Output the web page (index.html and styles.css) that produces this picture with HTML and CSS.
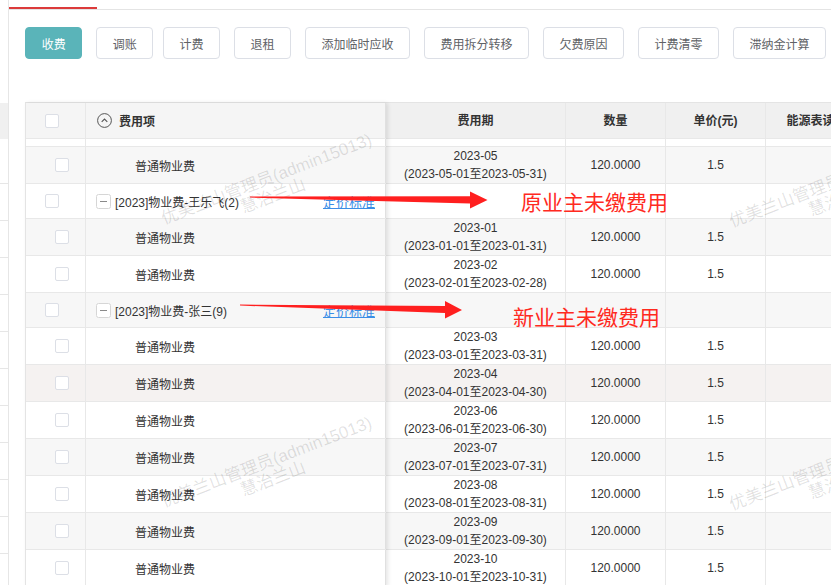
FILE: index.html
```html
<!doctype html>
<html lang="zh-CN">
  <head>
    <meta charset="UTF-8" />
    <meta name="viewport" content="width=device-width, initial-scale=1.0" />
    <title>费用明细</title>
    <link rel="stylesheet" href="styles.css">
  </head>
  <body>
    <div class="page">
      <div class="side"></div>

      <main class="main">
        <div class="tabs"><span class="tab-active"></span></div>

        <div class="toolbar">
          <button class="btn btn-primary">收费</button>
          <button class="btn">调账</button>
          <button class="btn btn-tight">计费</button>
          <button class="btn">退租</button>
          <button class="btn">添加临时应收</button>
          <button class="btn">费用拆分转移</button>
          <button class="btn">欠费原因</button>
          <button class="btn">计费清零</button>
          <button class="btn">滞纳金计算</button>
        </div>

        <div class="fee-table">
          <!-- fixed left columns -->
          <div class="fixed-cols">
            <div class="row head">
              <div class="cell col-check"><span class="checkbox"></span></div>
              <div class="cell col-item">
                <svg class="icon-fold" width="15" height="15" viewBox="0 0 15 15">
                  <circle cx="7.5" cy="7.5" r="6.9" fill="none" stroke="#555" stroke-width="1" />
                  <path d="M4.7 8.9 L7.5 6.1 L10.3 8.9" fill="none" stroke="#555" stroke-width="1.1" />
                </svg>
                费用项
              </div>
            </div>
            <div class="row stub">
              <div class="cell col-check"></div>
              <div class="cell col-item"></div>
            </div>
            <div class="row stripe">
              <div class="cell col-check child"><span class="checkbox"></span></div>
              <div class="cell col-item child">普通物业费</div>
            </div>
            <div class="row group">
              <div class="cell col-check"><span class="checkbox"></span></div>
              <div class="cell col-item">
                <svg class="icon-minus" width="15" height="15" viewBox="0 0 15 15">
                  <rect x="0.5" y="0.5" width="14" height="14" rx="2" fill="#fff" stroke="#d6d6d6" />
                  <path d="M4 7.5 H11" stroke="#8a8a8a" stroke-width="1" />
                </svg>
                [2023]物业费-王乐飞(2)
                <a class="price-link" href="#">定价标准</a>
              </div>
            </div>
            <div class="row stripe">
              <div class="cell col-check child"><span class="checkbox"></span></div>
              <div class="cell col-item child">普通物业费</div>
            </div>
            <div class="row">
              <div class="cell col-check child"><span class="checkbox"></span></div>
              <div class="cell col-item child">普通物业费</div>
            </div>
            <div class="row group stripe">
              <div class="cell col-check"><span class="checkbox"></span></div>
              <div class="cell col-item">
                <svg class="icon-minus" width="15" height="15" viewBox="0 0 15 15">
                  <rect x="0.5" y="0.5" width="14" height="14" rx="2" fill="#fff" stroke="#d6d6d6" />
                  <path d="M4 7.5 H11" stroke="#8a8a8a" stroke-width="1" />
                </svg>
                [2023]物业费-张三(9)
                <a class="price-link" href="#">定价标准</a>
              </div>
            </div>
            <div class="row">
              <div class="cell col-check child"><span class="checkbox"></span></div>
              <div class="cell col-item child">普通物业费</div>
            </div>
            <div class="row hover">
              <div class="cell col-check child"><span class="checkbox"></span></div>
              <div class="cell col-item child">普通物业费</div>
            </div>
            <div class="row">
              <div class="cell col-check child"><span class="checkbox"></span></div>
              <div class="cell col-item child">普通物业费</div>
            </div>
            <div class="row stripe">
              <div class="cell col-check child"><span class="checkbox"></span></div>
              <div class="cell col-item child">普通物业费</div>
            </div>
            <div class="row">
              <div class="cell col-check child"><span class="checkbox"></span></div>
              <div class="cell col-item child">普通物业费</div>
            </div>
            <div class="row stripe">
              <div class="cell col-check child"><span class="checkbox"></span></div>
              <div class="cell col-item child">普通物业费</div>
            </div>
            <div class="row">
              <div class="cell col-check child"><span class="checkbox"></span></div>
              <div class="cell col-item child">普通物业费</div>
            </div>
          </div>

          <!-- scrolling columns -->
          <div class="scroll-cols">
            <div class="row head">
              <div class="cell col-period">费用期</div>
              <div class="cell col-qty">数量</div>
              <div class="cell col-price">单价(元)</div>
              <div class="cell col-meter">能源表读</div>
            </div>
            <div class="row stub">
              <div class="cell col-period"></div>
              <div class="cell col-qty"></div>
              <div class="cell col-price"></div>
              <div class="cell col-meter"></div>
            </div>
            <div class="row stripe">
              <div class="cell col-period">2023-05<br>(2023-05-01至2023-05-31)</div>
              <div class="cell col-qty">120.0000</div>
              <div class="cell col-price">1.5</div>
              <div class="cell col-meter"></div>
            </div>
            <div class="row group">
              <div class="cell col-period"></div>
              <div class="cell col-qty"></div>
              <div class="cell col-price"></div>
              <div class="cell col-meter"></div>
            </div>
            <div class="row stripe">
              <div class="cell col-period">2023-01<br>(2023-01-01至2023-01-31)</div>
              <div class="cell col-qty">120.0000</div>
              <div class="cell col-price">1.5</div>
              <div class="cell col-meter"></div>
            </div>
            <div class="row">
              <div class="cell col-period">2023-02<br>(2023-02-01至2023-02-28)</div>
              <div class="cell col-qty">120.0000</div>
              <div class="cell col-price">1.5</div>
              <div class="cell col-meter"></div>
            </div>
            <div class="row group stripe">
              <div class="cell col-period"></div>
              <div class="cell col-qty"></div>
              <div class="cell col-price"></div>
              <div class="cell col-meter"></div>
            </div>
            <div class="row">
              <div class="cell col-period">2023-03<br>(2023-03-01至2023-03-31)</div>
              <div class="cell col-qty">120.0000</div>
              <div class="cell col-price">1.5</div>
              <div class="cell col-meter"></div>
            </div>
            <div class="row hover">
              <div class="cell col-period">2023-04<br>(2023-04-01至2023-04-30)</div>
              <div class="cell col-qty">120.0000</div>
              <div class="cell col-price">1.5</div>
              <div class="cell col-meter"></div>
            </div>
            <div class="row">
              <div class="cell col-period">2023-06<br>(2023-06-01至2023-06-30)</div>
              <div class="cell col-qty">120.0000</div>
              <div class="cell col-price">1.5</div>
              <div class="cell col-meter"></div>
            </div>
            <div class="row stripe">
              <div class="cell col-period">2023-07<br>(2023-07-01至2023-07-31)</div>
              <div class="cell col-qty">120.0000</div>
              <div class="cell col-price">1.5</div>
              <div class="cell col-meter"></div>
            </div>
            <div class="row">
              <div class="cell col-period">2023-08<br>(2023-08-01至2023-08-31)</div>
              <div class="cell col-qty">120.0000</div>
              <div class="cell col-price">1.5</div>
              <div class="cell col-meter"></div>
            </div>
            <div class="row stripe">
              <div class="cell col-period">2023-09<br>(2023-09-01至2023-09-30)</div>
              <div class="cell col-qty">120.0000</div>
              <div class="cell col-price">1.5</div>
              <div class="cell col-meter"></div>
            </div>
            <div class="row">
              <div class="cell col-period">2023-10<br>(2023-10-01至2023-10-31)</div>
              <div class="cell col-qty">120.0000</div>
              <div class="cell col-price">1.5</div>
              <div class="cell col-meter"></div>
            </div>
          </div>
        </div>
      </main>

      <!-- watermark overlay -->
      <div class="watermark wm-1">优美兰山管理员(admin15013)<br>慧治兰山</div>
      <div class="watermark wm-2">优美兰山管理员(admin15013)<br>慧治兰山</div>
      <div class="watermark wm-3">优美兰山管理员(admin15013)<br>慧治兰山</div>
      <div class="watermark wm-4">优美兰山管理员(admin15013)<br>慧治兰山</div>

      <!-- annotation arrows -->
      <svg class="arrows" width="831" height="585" viewBox="0 0 831 585">
        <polygon points="250,196.6 470,196.2 470,191.5 487.5,200 470,208.5 470,203.4 250,197.6" fill="#ff1f1f" />
        <polygon points="240,304.6 445,306 445,301 462,310 445,318.5 445,313 240,305.6" fill="#ff1f1f" />
      </svg>
      <div class="note note-old">原业主未缴费用</div>
      <div class="note note-new">新业主未缴费用</div>
    </div>
  </body>
</html>
```

FILE: styles.css
```css
* {
  box-sizing: border-box;
}
html,
body {
  margin: 0;
}
body {
  font-family: 'Liberation Sans', 'Noto Sans CJK SC', sans-serif;
  font-size: 12px;
  color: #333;
  background: #fff;
}
.page {
  position: relative;
  display: flex;
  width: 831px;
  height: 585px;
  overflow: hidden;
}
.side {
  flex: none;
  width: 9px;
  border-right: 1px solid #e6e6e6;
  background-image: linear-gradient(#f0f0f0, #f0f0f0),
    repeating-linear-gradient(to bottom, transparent 0 36px, #e6e6e6 36px 37px);
  background-position: 0 103px, 0 147px;
  background-size: 100% 36px, 100% 440px;
  background-repeat: no-repeat;
}
.main {
  flex: none;
  width: 1000px;
  padding-left: 16px;
}
.tabs {
  height: 10px;
  padding-top: 7px;
  margin-left: -16px;
  border-bottom: 1px solid #e4e4e4;
}
.tab-active {
  display: block;
  width: 88px;
  height: 2px;
  background: #dc3b3b;
}
.toolbar {
  display: flex;
  gap: 13.6px;
  margin-top: 17px;
}
.btn {
  height: 32px;
  padding: 0 15.7px;
  border: 1px solid #dcdfe6;
  border-radius: 4px;
  background: #fff;
  color: #606266;
  font-family: inherit;
  font-size: 12px;
  white-space: nowrap;
}
.btn-primary {
  background: #5ab4b9;
  border-color: #5ab4b9;
  color: #fff;
}
.btn-tight {
  margin-left: -4.2px;
}

/* table */
.fee-table {
  display: flex;
  margin-top: 43px;
  border-top: 1px solid #e4e4e4;
}
.fixed-cols {
  position: relative;
  z-index: 1;
  flex: none;
  border-left: 1px solid #e4e4e4;
  background: #fff;
  box-shadow: 2px 0 4px rgba(0, 0, 0, 0.1);
}
.scroll-cols {
  flex: none;
}
.row {
  display: flex;
  height: 37px;
  border-bottom: 1px solid #e8e8e8;
  background: #fff;
}
.row.head {
  height: 36px;
  background: #f5f5f5;
  font-weight: bold;
}
.scroll-cols .row.head {
  background: #f0f0f0;
}
.row.stub {
  height: 8px;
}
.row.group {
  height: 35px;
}
.row.stripe {
  background: #f7f7f7;
}
.row.hover {
  background: #f5f2f1;
}
.cell {
  display: flex;
  align-items: center;
  border-right: 1px solid #e8e8e8;
}
.col-check {
  width: 60px;
  padding-left: 19px;
}
.col-check.child {
  padding-left: 29px;
}
.checkbox {
  display: block;
  width: 14px;
  height: 14px;
  border: 1px solid #dcdfe6;
  border-radius: 2px;
  background: #fff;
}
.col-item {
  width: 300px;
  padding-left: 10px;
  padding-right: 10px;
  border-right-color: #e0e0e0;
}
.row.head .col-item {
  padding-left: 11px;
}
.col-item.child {
  padding-left: 49px;
}
.icon-fold {
  margin-right: 7px;
}
.icon-minus {
  margin-right: 4px;
}
.price-link {
  margin-left: auto;
  color: #3a8ee6;
  font-size: 13px;
  text-decoration: underline;
}
.col-period,
.col-qty,
.col-price,
.col-meter {
  justify-content: center;
  text-align: center;
  line-height: 18px;
  white-space: nowrap;
}
.col-period {
  width: 180px;
}
.col-qty,
.col-price {
  width: 100px;
}
.col-meter {
  width: 90px;
}

/* overlays */
.watermark {
  position: absolute;
  z-index: 2;
  width: 260px;
  height: 36px;
  color: rgba(0, 0, 0, 0.12);
  font-size: 17px;
  line-height: 18px;
  text-align: center;
  white-space: nowrap;
  transform: rotate(-21deg);
  pointer-events: none;
}
.wm-1 {
  left: 140px;
  top: 170px;
}
.wm-2 {
  left: 140px;
  top: 453px;
}
.wm-3 {
  left: 708px;
  top: 173px;
}
.wm-4 {
  left: 708px;
  top: 456px;
}
.arrows {
  position: absolute;
  z-index: 3;
  left: 0;
  top: 0;
  pointer-events: none;
}
.note {
  position: absolute;
  z-index: 3;
  color: #ff2a1f;
  font-family: 'Noto Sans CJK SC', sans-serif;
  font-size: 21px;
  line-height: 21px;
  white-space: nowrap;
}
.note-old {
  left: 521px;
  top: 191px;
}
.note-new {
  left: 513px;
  top: 306px;
}
```
